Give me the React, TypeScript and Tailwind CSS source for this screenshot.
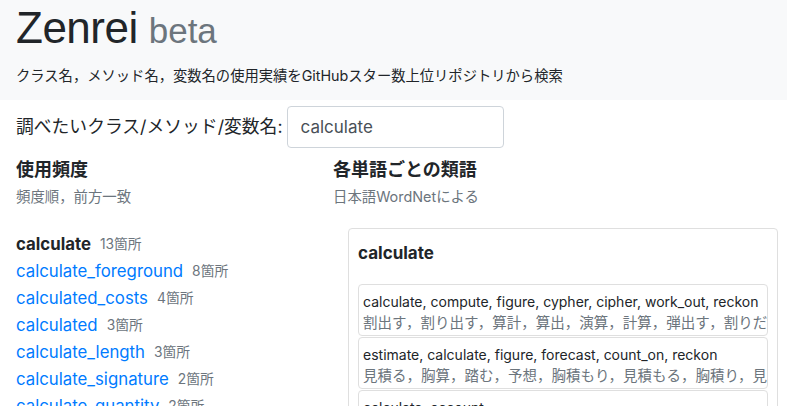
const font = { fontFamily: 'Inter, "Noto Sans CJK JP", sans-serif' };
const titleFont = { fontFamily: '"Liberation Sans", "Noto Sans CJK JP", sans-serif' };

const usages = [
  { name: "calculate", count: 13, current: true },
  { name: "calculate_foreground", count: 8 },
  { name: "calculated_costs", count: 4 },
  { name: "calculated", count: 3 },
  { name: "calculate_length", count: 3 },
  { name: "calculate_signature", count: 2 },
  { name: "calculate_quantity", count: 2 },
];

const synsets = [
  {
    en: "calculate, compute, figure, cypher, cipher, work_out, reckon",
    ja: "割出す，割り出す，算計，算出，演算，計算，弾出す，割りだす，弾き出す",
  },
  {
    en: "estimate, calculate, figure, forecast, count_on, reckon",
    ja: "見積る，胸算，踏む，予想，胸積もり，見積もる，胸積り，見込む",
  },
  {
    en: "calculate, account",
    ja: "見なす，思う，考える",
  },
];

export default function App() {
  return (
    <div className="h-[406px] overflow-hidden bg-white text-[#212529]" style={font}>
      {/* HEADER */}
      <header className="h-[100px] bg-[#f8f9fa] px-4 pt-[6px]">
        <h1 className="flex items-baseline gap-[11px] leading-none" style={titleFont}>
          <span className="text-[44px] font-normal tracking-[-0.5px]">Zenrei</span>
          <span className="text-[35px] text-[#6c757d]">beta</span>
        </h1>
        <p className="mt-[15px] text-[14.3px]">
          クラス名，メソッド名，変数名の使用実績をGitHubスター数上位リポジトリから検索
        </p>
      </header>

      <main className="px-4">
        {/* SEARCH */}
        <div className="mt-[6px] flex items-center gap-[4px]">
          <label className="text-[17.8px]">調べたいクラス/メソッド/変数名:</label>
          <input
            defaultValue="calculate"
            className="h-[42px] w-[217px] rounded-[4px] border border-[#ced4da] px-[13px] text-[17px] text-[#495057] outline-none"
            style={font}
          />
        </div>

        <div className="flex">
          {/* LEFT COLUMN */}
          <div className="w-[317px] shrink-0">
            <h2 className="mt-[10px] text-[18px] font-bold leading-[24px]">使用頻度</h2>
            <p className="mt-[6px] text-[14.4px] leading-[18px] text-[#6c757d]">頻度順，前方一致</p>
            <ul className="mt-[25px]">
              {usages.map((u) => (
                <li key={u.name} className="flex h-[27px] items-center">
                  <span
                    className={`text-[16.8px] ${
                      u.current ? "font-bold text-[#212529]" : "text-[#007bff]"
                    }`}
                  >
                    {u.name}
                  </span>
                  <span className="ml-[9px] text-[13.8px] text-[#6c757d]">{u.count}箇所</span>
                </li>
              ))}
            </ul>
          </div>

          {/* RIGHT COLUMN */}
          <div className="min-w-0 flex-1">
            <h2 className="mt-[10px] text-[18px] font-bold leading-[24px]">各単語ごとの類語</h2>
            <p className="mt-[6px] text-[14.4px] leading-[18px] text-[#6c757d]">日本語WordNetによる</p>

            <div className="ml-[15px] mr-[-7px] mt-[22px] rounded-[4px] border border-[#dfdfdf] px-[9px] pb-2">
              <h3 className="pt-[12px] text-[17px] font-bold leading-[24px]">calculate</h3>
              <div className="mt-[19px] flex flex-col gap-[1px]">
                {synsets.map((s) => (
                  <div
                    key={s.en}
                    className="overflow-hidden whitespace-nowrap rounded-[4px] border border-[#dfdfdf] px-[4px] pb-[2px] pt-[6px] leading-[21px]"
                  >
                    <div className="text-[14px]">{s.en}</div>
                    <div className="text-[14.5px] text-[#6c757d]">{s.ja}</div>
                  </div>
                ))}
              </div>
            </div>
          </div>
        </div>
      </main>
    </div>
  );
}
